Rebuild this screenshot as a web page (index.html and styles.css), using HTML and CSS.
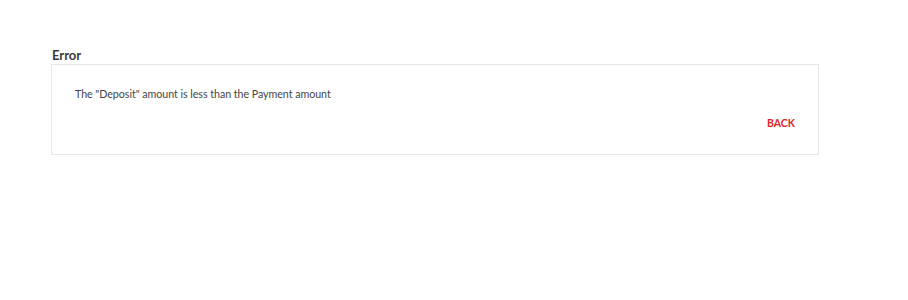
FILE: index.html
```html
<!DOCTYPE html>
<html>
<head>
	<title>Error</title>
	<meta charset="utf-8">
	<link rel="stylesheet" href="styles.css">
</head>
<body>
	<div class="page">
		<h2 class="page__title">Error</h2>
		<div class="dialog">
			<p class="dialog__text">The "Deposit" amount is less than the Payment amount</p>
			<div class="dialog__actions">
				<button class="dialog__button" type="button">BACK</button>
			</div>
		</div>
	</div>
</body>
</html>
```

FILE: styles.css
```css
body {
	margin: 0;
	background: #fff;
	font-family: Lato, "Open Sans", sans-serif;
	color: #333;
}
.page {
	padding: 47px 0 0 51px;
	width: 768px;
}
.page__title {
	margin: 0 0 1px 1px;
	font-size: 13px;
	font-weight: bold;
	line-height: 16px;
	color: #3a3a3a;
}
.dialog {
	border: 1px solid #e6e6e6;
	padding: 22px 23px 24px 23px;
	box-sizing: border-box;
	height: 91px;
}
.dialog__text {
	margin: 0;
	font-size: 10.7px;
	line-height: 14px;
	color: #444;
	letter-spacing: -0.05px;
}
.dialog__actions {
	display: flex;
	justify-content: flex-end;
	margin-top: 16px;
}
.dialog__button {
	background: none;
	border: none;
	padding: 0;
	font-family: inherit;
	font-size: 10.5px;
	font-weight: bold;
	color: #e0262b;
}
```
